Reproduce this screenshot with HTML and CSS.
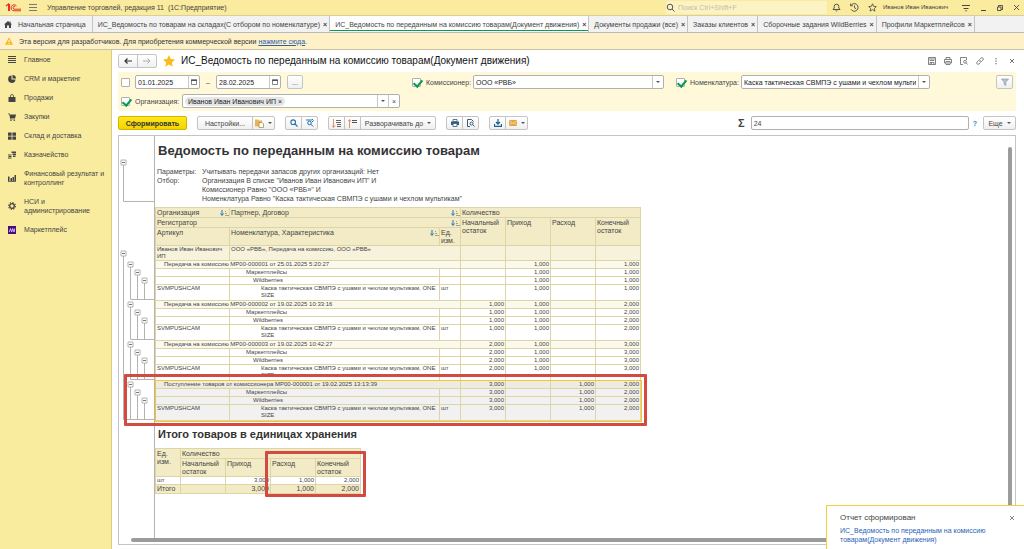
FILE: index.html
```
<!DOCTYPE html>
<html lang="ru">
<head>
    <meta charset="UTF-8">
    <meta name="viewport" content="width=device-width, initial-scale=1.0">
    <title>ИС_Ведомость по переданным на комиссию товарам(Документ движения)</title>
    <link rel="stylesheet" href="styles.css">
</head>
<body>
    <header class="titlebar">
        <svg class="logo" width="17" height="9" viewBox="0 0 17 9" fill="none" stroke="#e0342a"><path d="M1 3 3.500 1v7M4.500 8V1" stroke-width="1.100"/><path d="M11.500 3A3 3 0 1 0 9 7.800h7M10.200 3.300A1.400 1.400 0 1 0 9 6.200h7"/></svg>
        <button class="icon-btn" aria-label="Меню"><svg width="8" height="7" viewBox="0 0 8 7" stroke="#777"><path d="M0 .5h8M0 3.500h8M0 6.500h8"/></svg></button>
        <span class="app-name">Управление торговлей, редакция 11&nbsp; (1С:Предприятие)</span>
        <label class="search">
            <svg width="9" height="9" viewBox="0 0 9 9" fill="none" stroke="#555"><circle cx="4" cy="4" r="2.800"/><path d="m6 6 2.500 2.500"/></svg>
            <input type="text" placeholder="Поиск Ctrl+Shift+F" aria-label="Поиск">
        </label>
        <div class="title-icons">
            <button class="icon-btn" aria-label="Уведомления"><svg width="9" height="9" viewBox="0 0 9 9" fill="none" stroke="#444" stroke-width=".9"><path d="M1 6.500h7L6.800 5V3.500a2.300 2.300 0 0 0-4.600 0V5zM3.600 7.500q.9 1 1.800 0"/></svg></button>
            <button class="icon-btn" aria-label="История"><svg width="9" height="9" viewBox="0 0 9 9" fill="none" stroke="#444" stroke-width=".9"><path d="M1 2.500A3.800 3.800 0 1 1 1 6.300M.6.600v2.200h2.200M4.500 2.500v2.300l1.500.9"/></svg></button>
            <button class="icon-btn" aria-label="Избранное"><svg width="9" height="9" viewBox="0 0 9 9" fill="none" stroke="#444" stroke-width=".8"><path d="m4.500.8 1.100 2.500 2.700.3-2 1.800.6 2.700-2.400-1.400-2.400 1.400.6-2.700-2-1.800 2.700-.3z"/></svg></button>
            <span class="user">Иванов Иван Иванович</span>
            <button class="icon-btn" aria-label="Сервис"><svg width="8" height="8" viewBox="0 0 8 8" stroke="#444"><path d="M0 1.500h8M1.500 4.500h5"/><path d="m2.500 6.500 1.500 1 1.500-1z" fill="#444" stroke="none"/></svg></button>
            <button class="icon-btn" aria-label="Свернуть"><svg width="8" height="8" viewBox="0 0 8 8" stroke="#444"><path d="M2 6.500h5"/></svg></button>
            <button class="icon-btn" aria-label="Развернуть"><svg width="8" height="8" viewBox="0 0 8 8" fill="none" stroke="#444" stroke-width=".9"><path d="M1.500 3h3.500v3.500h-3.500zM2.500 3V1.500h4v4H5"/></svg></button>
            <button class="icon-btn" aria-label="Закрыть"><svg width="7" height="7" viewBox="0 0 7 7" stroke="#444" stroke-width=".9"><path d="m1 1 5 5M6 1 1 6"/></svg></button>
        </div>
    </header>

    <nav class="tabs">
        <a class="tab home" href="#"><svg width="8" height="7" viewBox="0 0 8 7" fill="#444"><path d="M4 0 0 3.500h1V7h2V4.500h2V7h2V3.500h1L6.500 2V.5h-1v1z"/></svg>Начальная страница</a>
        <a class="tab" href="#">ИС_Ведомость по товарам на складах(С отбором по номенклатуре)<b>×</b></a>
        <a class="tab active" href="#">ИС_Ведомость по переданным на комиссию товарам(Документ движения)<b>×</b></a>
        <a class="tab" href="#">Документы продажи (все)<b>×</b></a>
        <a class="tab" href="#">Заказы клиентов<b>×</b></a>
        <a class="tab" href="#">Сборочные задания WildBerries<b>×</b></a>
        <a class="tab" href="#">Профили Маркетплейсов<b>×</b></a>
    </nav>

    <div class="notice">
        <svg width="8" height="8" viewBox="0 0 8 8"><path d="M4 .3 8 7.700H0z" fill="#f7b91e"/><path d="M4 3v2.300M4 6v.8" stroke="#fff"/></svg>
        <span>Эта версия для разработчиков. Для приобретения коммерческой версии <a href="#">нажмите сюда</a>.</span>
    </div>

    <div class="workspace">
        <nav class="sidebar">
            <a href="#"><svg width="8" height="8" viewBox="0 0 8 8" stroke="#444"><path d="M0 .5h8M0 2.500h8M0 4.500h8M0 6.500h8"/></svg>Главное</a>
            <a href="#"><svg width="8" height="8" viewBox="0 0 8 8" fill="#444"><path d="M3.500.5v4h4A3.700 3.700 0 1 1 3.500.5zM4.500 0A3.500 3.500 0 0 1 8 3.500H4.500z"/></svg>CRM и маркетинг</a>
            <a href="#"><svg width="8" height="8" viewBox="0 0 8 8" fill="#444"><path d="M.5 3h7v5h-7z"/><path d="M2.500 3.500V2a1.500 1.500 0 0 1 3 0v1.500" fill="none" stroke="#444" stroke-width=".8"/></svg>Продажи</a>
            <a href="#"><svg width="8" height="8" viewBox="0 0 8 8" fill="#444"><path d="M0 .5h1.500L2 1.500h6L7.200 5H2.800v.6H7v.6H2.200L1.300 1.200H0z"/><circle cx="3" cy="7.200" r=".8"/><circle cx="6.300" cy="7.200" r=".8"/></svg>Закупки</a>
            <a href="#"><svg width="8" height="8" viewBox="0 0 8 8" fill="#444"><path d="M0 .5h3.600v3.200H0zM4.400.5H8v3.200H4.400zM0 4.500h3.600v3.200H0zM4.400 4.500H8v3.200H4.400z"/></svg>Склад и доставка</a>
            <a href="#"><svg width="8" height="8" viewBox="0 0 8 8" fill="#444"><path d="M3.500.5H8V2H3.500zM4.500 2.500H8V4H4.500zM5 4.500h2.500V6H5zM0 3.500h3.500v1H0zM.5 5h3v1h-3zM0 6.500h3.500v1H0z"/></svg>Казначейство</a>
            <a href="#"><svg width="8" height="8" viewBox="0 0 8 8" fill="#444"><path d="M0 2.500h1.500V7H0zM2.500 4H4v3H2.500zM4.500 3H6v4H4.500zM6.500 1H8v6H6.500zM0 7h8v.7H0z"/></svg>Финансовый результат и контроллинг</a>
            <a href="#"><svg width="8" height="8" viewBox="0 0 8 8" fill="none" stroke="#444"><circle cx="4" cy="4" r="2.300" stroke-width="1.300"/><circle cx="4" cy="4" r="3.400" stroke-width="1.100" stroke-dasharray="1.330 1.330"/></svg>НСИ и администрирование</a>
            <a href="#"><svg width="8" height="8" viewBox="0 0 8 8"><path d="M0 0h8v8H0z" fill="#42107c"/><path d="M1.300 6 2.500 2.500 3.700 6l1-3.500L6 6l.8-3.500" fill="none" stroke="#e9b8f5" stroke-width=".9"/></svg>Маркетплейс</a>
        </nav>

        <main class="form">
            <div class="form-head">
                <div class="btn-group">
                    <button class="btn nav-btn" aria-label="Назад"><svg width="8" height="6" viewBox="0 0 8 6" fill="none" stroke="#333" stroke-width="1.200"><path d="M8 3H1M3.500.5 1 3l2.500 2.500"/></svg></button>
                    <button class="btn nav-btn" aria-label="Вперед"><svg width="8" height="6" viewBox="0 0 8 6" fill="none" stroke="#aaa"><path d="M0 3h7M4.500.5 7 3 4.500 5.500"/></svg></button>
                </div>
                <svg class="star" width="12" height="12" viewBox="0 0 12 12" fill="#f6bd1b"><path d="m6 0 1.800 4.100 4.200.4-3.200 2.900 1 4.300L6 9.500l-3.800 2.200 1-4.300L0 4.500l4.200-.4z"/></svg>
                <h1>ИС_Ведомость по переданным на комиссию товарам(Документ движения)</h1>
                <div class="form-icons">
                    <button class="icon-btn" aria-label="Сохранить"><svg width="8" height="8" viewBox="0 0 8 8" fill="none" stroke="#666" stroke-width=".8"><path d="M.5.500h7v7h-7zM2 .5v3h4v-3M3 2h2M2 7.500v-2h4v2M3 6.500h1"/></svg></button>
                    <button class="icon-btn" aria-label="Печать"><svg width="8" height="8" viewBox="0 0 8 8" fill="none" stroke="#666" stroke-width=".8"><path d="M2 2.500v-2h4v2M2 6H.5V2.500h7V6H6M2 4.500h4v3H2zM3 6h2"/></svg></button>
                    <button class="icon-btn" aria-label="Просмотр"><svg width="8" height="8" viewBox="0 0 8 8" fill="none" stroke="#666" stroke-width=".8"><path d="M3 7.500H.5v-7h6V3"/><circle cx="5" cy="4.800" r="1.400"/><path d="m6 5.800 1.800 1.800"/></svg></button>
                    <button class="icon-btn" aria-label="Ссылка"><svg width="8" height="8" viewBox="0 0 8 8" fill="none" stroke="#666" stroke-width=".8"><path d="M3.500 2.500 5 1q1-.8 1.900.1.900.9.1 1.900L5.500 4.500q-1 .8-2 0M4.500 5.500 3 7q-1 .8-1.900-.1-.9-.9-.1-1.900L2.500 3.500q1-.8 2 0"/></svg></button>
                    <button class="icon-btn" aria-label="Еще"><svg width="8" height="8" viewBox="0 0 8 8" fill="#555"><path d="M3.500 1h1v1.200h-1zM3.500 3.500h1v1.200h-1zM3.500 6h1v1.200h-1z"/></svg></button>
                    <button class="icon-btn" aria-label="Закрыть"><svg width="8" height="8" viewBox="0 0 8 8" stroke="#666" stroke-width=".9"><path d="m2 2 4 4M6 2 2 6"/></svg></button>
                </div>
            </div>

            <section class="filters">
                <div class="filter">
                    <input type="checkbox" aria-label="Период">
                    <div class="combo date"><input type="text" value="01.01.2025" aria-label="Начало периода"><button aria-label="Календарь"><svg width="6" height="6" viewBox="0 0 6 6"><path d="M.5 1h5v4.500h-5z" fill="none" stroke="#555" stroke-width=".7"/><path d="M0 .5h6v1.500H0z" fill="#555"/></svg></button></div>
                    <span class="dash">–</span>
                    <div class="combo date"><input type="text" value="28.02.2025" aria-label="Конец периода"><button aria-label="Календарь"><svg width="6" height="6" viewBox="0 0 6 6"><path d="M.5 1h5v4.500h-5z" fill="none" stroke="#555" stroke-width=".7"/><path d="M0 .5h6v1.500H0z" fill="#555"/></svg></button></div>
                    <button class="btn dots">...</button>
                </div>
                <div class="filter commissioner">
                    <input type="checkbox" id="useCommissioner" checked>
                    <label for="useCommissioner">Комиссионер:</label>
                    <div class="combo"><input type="text" value="ООО «РВБ»" aria-label="Комиссионер"><button class="arrow" aria-label="Выбрать"></button></div>
                </div>
                <div class="filter item">
                    <input type="checkbox" id="useItem" checked>
                    <label for="useItem">Номенклатура:</label>
                    <div class="combo"><input type="text" value="Каска тактическая СВМПЭ с ушами и чехлом мультикам" aria-label="Номенклатура"><button class="arrow" aria-label="Выбрать"></button></div>
                </div>
                <button class="btn" aria-label="Отбор"><svg width="8" height="8" viewBox="0 0 8 8"><path d="M.5 1h7L4.800 4.200V7.500l-1.600-1V4.200z" fill="#b9c3cc" stroke="#8c99a5" stroke-width=".7"/></svg></button>
                <div class="filter org">
                    <input type="checkbox" id="useOrg" checked>
                    <label for="useOrg">Организация:</label>
                    <div class="combo"><span class="chip">Иванов Иван Иванович ИП <i>×</i></span><button class="arrow" aria-label="Выбрать"></button><button aria-label="Очистить">×</button></div>
                </div>
            </section>

            <div class="toolbar">
                <button class="btn primary">Сформировать</button>
                <div class="btn-group">
                    <button class="btn settings">Настройки...</button>
                    <button class="btn drop" aria-label="Варианты"><svg width="9" height="9" viewBox="0 0 9 9"><path d="M0 .5h3l1 1h3v6H0z" fill="#e9b552"/><path d="M4 3.500h3l1.500 1.500v3.500H4z" fill="#fff" stroke="#a87b33" stroke-width=".7"/></svg></button>
                </div>
                <div class="btn-group">
                    <button class="btn" aria-label="Найти"><svg width="8" height="8" viewBox="0 0 8 8" fill="none" stroke="#2273a8" stroke-width="1.100"><circle cx="3.200" cy="3.200" r="2.300"/><path d="m5 5 2.500 2.500"/></svg></button>
                    <button class="btn" aria-label="Искать далее"><svg width="8" height="8" viewBox="0 0 8 8" fill="none" stroke="#2273a8"><circle cx="3.500" cy="4" r="1.800"/><path d="m5 5.300 2 2.200M0 1h6M6 0l1.500 1.500L6 3"/></svg></button>
                </div>
                <div class="btn-group">
                    <button class="btn" aria-label="Развернуть"><svg width="9" height="9" viewBox="0 0 9 9" fill="none"><path d="M1.500 0v8M0 6.500l1.500 2 1.500-2" stroke="#e0784a" stroke-width=".8"/><path d="M4 1.500h5M4 3.500h5M5 5.500h4M5 7.500h4" stroke="#666"/></svg></button>
                    <button class="btn" aria-label="Свернуть"><svg width="9" height="9" viewBox="0 0 9 9" fill="none"><path d="M1.500 9V1M0 2.500l1.500-2 1.500 2" stroke="#e0784a" stroke-width=".8"/><path d="M4 1.500h5M4 3.500h5" stroke="#555"/></svg></button>
                    <button class="btn drop expand">Разворачивать до</button>
                </div>
                <div class="btn-group">
                    <button class="btn" aria-label="Печать"><svg width="8" height="8" viewBox="0 0 8 8"><path d="M0 2.500h8V6H0z" fill="#355c7d"/><path d="M2 .5h4v2H2zM2 4.500h4v3H2z" fill="#fff" stroke="#355c7d" stroke-width=".8"/></svg></button>
                    <button class="btn" aria-label="Просмотр"><svg width="8" height="8" viewBox="0 0 8 8" fill="none" stroke="#355c7d"><path d="M3 7.500H.5v-7h4L6.500 2.500"/><circle cx="4.500" cy="4.500" r="1.500"/><path d="m5.500 5.500 2 2"/></svg></button>
                </div>
                <div class="btn-group">
                    <button class="btn" aria-label="Сохранить"><svg width="8" height="8" viewBox="0 0 8 8" fill="none" stroke="#1d5f92" stroke-width="1.200"><path d="M4 0v5M2 3l2 2.200L6 3M.5 5v2.300h7V5"/></svg></button>
                    <button class="btn drop" aria-label="Отправить"><svg width="8" height="6" viewBox="0 0 8 6"><path d="M0 0h8v6H0z" fill="#e8a33c"/><path d="m0 .5 4 3 4-3M0 5.500l2.500-2.500M8 5.500 5.500 3" fill="none" stroke="#fff" stroke-width=".6"/></svg></button>
                </div>
                <label class="sigma" for="sum">Σ</label>
                <input class="sum" id="sum" type="text" value="24">
                <a class="help" href="#">?</a>
                <button class="btn drop more">Еще</button>
            </div>

            <section class="sheet">
                <svg class="gutter" width="36" height="402" viewBox="0 0 36 402" fill="none" stroke="#b4b4b4">
                    <defs>
                        <g id="node"><path d="M-2.500-2.500h5v5h-5z" fill="#fff"/><path d="M-1.500 0h3" stroke="#777"/></g>
                        <g id="branch">
                            <path d="M11.500 0v35.500h24M18.500 8v27M25.500 16v19"/>
                            <use href="#node" x="11.500" y=".5"/>
                            <use href="#node" x="18.500" y="8.500"/>
                            <use href="#node" x="25.500" y="16.500"/>
                        </g>
                    </defs>
                    <path d="M4.500 27v38.500h31.500M4.500 117v166.500h31.500M35.500 0v402"/>
                    <use href="#node" x="4.500" y="26.500"/>
                    <use href="#node" x="4.500" y="117.500"/>
                    <use href="#branch" y="128"/>
                    <use href="#branch" y="168"/>
                    <use href="#branch" y="208"/>
                    <use href="#branch" y="248"/>
                </svg>
                <div class="report">
                    <h2>Ведомость по переданным на комиссию товарам</h2>
                    <dl class="params">
                        <dt>Параметры:</dt><dd>Учитывать передачи запасов других организаций: Нет</dd>
                        <dt>Отбор:</dt><dd>Организация В списке "Иванов Иван Иванович ИП" И<br>Комиссионер Равно "ООО «РВБ»" И<br>Номенклатура Равно "Каска тактическая СВМПЭ с ушами и чехлом мультикам"</dd>
                    </dl>

                    <table class="main-table">
                        <colgroup><col class="c-org"><col class="c-item"><col class="c-unit"><col class="c-num"><col class="c-num"><col class="c-num"><col class="c-num"></colgroup>
                        <thead>
                            <tr><th class="sorted">Организация</th><th class="sorted" colspan="2">Партнер, Договор</th><th colspan="4">Количество</th></tr>
                            <tr><th class="sorted" colspan="3">Регистратор</th><th rowspan="2">Начальный остаток</th><th rowspan="2">Приход</th><th rowspan="2">Расход</th><th rowspan="2">Конечный остаток</th></tr>
                            <tr><th>Артикул</th><th class="sorted">Номенклатура, Характеристика</th><th>Ед. изм.</th></tr>
                        </thead>
                        <tbody>
                            <tr class="partner"><td>Иванов Иван Иванович ИП</td><td colspan="2">ООО «РВБ», Передача на комиссию, ООО «РВБ»</td><td></td><td></td><td></td><td></td></tr>
                        </tbody>
                        <tbody>
                            <tr class="doc"><td colspan="3">Передача на комиссию МР00-000001 от 25.01.2025 5:20:27</td><td></td><td>1,000</td><td></td><td>1,000</td></tr>
                            <tr><td></td><td class="l1">Маркетплейсы</td><td></td><td></td><td>1,000</td><td></td><td>1,000</td></tr>
                            <tr><td></td><td class="l2">Wildberries</td><td></td><td></td><td>1,000</td><td></td><td>1,000</td></tr>
                            <tr><td>SVMPUSHCAM</td><td class="l3">Каска тактическая СВМПЭ с ушами и чехлом мультикам, ONE SIZE</td><td>шт</td><td></td><td>1,000</td><td></td><td>1,000</td></tr>
                        </tbody>
                        <tbody>
                            <tr class="doc"><td colspan="3">Передача на комиссию МР00-000002 от 19.02.2025 10:33:16</td><td>1,000</td><td>1,000</td><td></td><td>2,000</td></tr>
                            <tr><td></td><td class="l1">Маркетплейсы</td><td></td><td>1,000</td><td>1,000</td><td></td><td>2,000</td></tr>
                            <tr><td></td><td class="l2">Wildberries</td><td></td><td>1,000</td><td>1,000</td><td></td><td>2,000</td></tr>
                            <tr><td>SVMPUSHCAM</td><td class="l3">Каска тактическая СВМПЭ с ушами и чехлом мультикам, ONE SIZE</td><td>шт</td><td>1,000</td><td>1,000</td><td></td><td>2,000</td></tr>
                        </tbody>
                        <tbody>
                            <tr class="doc"><td colspan="3">Передача на комиссию МР00-000003 от 19.02.2025 10:42:27</td><td>2,000</td><td>1,000</td><td></td><td>3,000</td></tr>
                            <tr><td></td><td class="l1">Маркетплейсы</td><td></td><td>2,000</td><td>1,000</td><td></td><td>3,000</td></tr>
                            <tr><td></td><td class="l2">Wildberries</td><td></td><td>2,000</td><td>1,000</td><td></td><td>3,000</td></tr>
                            <tr><td>SVMPUSHCAM</td><td class="l3">Каска тактическая СВМПЭ с ушами и чехлом мультикам, ONE SIZE</td><td>шт</td><td>2,000</td><td>1,000</td><td></td><td>3,000</td></tr>
                        </tbody>
                        <tbody class="selected">
                            <tr class="doc"><td colspan="3">Поступление товаров от комиссионера МР00-000001 от 19.02.2025 13:13:39</td><td>3,000</td><td></td><td>1,000</td><td>2,000</td></tr>
                            <tr><td></td><td class="l1">Маркетплейсы</td><td></td><td>3,000</td><td></td><td>1,000</td><td>2,000</td></tr>
                            <tr><td></td><td class="l2">Wildberries</td><td></td><td>3,000</td><td></td><td>1,000</td><td>2,000</td></tr>
                            <tr><td>SVMPUSHCAM</td><td class="l3">Каска тактическая СВМПЭ с ушами и чехлом мультикам, ONE SIZE</td><td>шт</td><td>3,000</td><td></td><td>1,000</td><td>2,000</td></tr>
                        </tbody>
                    </table>

                    <h3>Итого товаров в единицах хранения</h3>
                    <table class="total-table">
                        <colgroup><col class="c-total"><col class="c-num"><col class="c-num"><col class="c-num"><col class="c-num"></colgroup>
                        <thead>
                            <tr><th rowspan="2">Ед. изм.</th><th colspan="4">Количество</th></tr>
                            <tr><th>Начальный остаток</th><th>Приход</th><th>Расход</th><th>Конечный остаток</th></tr>
                        </thead>
                        <tbody>
                            <tr><td>шт</td><td></td><td>3,000</td><td>1,000</td><td>2,000</td></tr>
                            <tr class="total"><td>Итого</td><td></td><td>3,000</td><td>1,000</td><td>2,000</td></tr>
                        </tbody>
                    </table>
                </div>
                <div class="scroll-y"></div>
                <div class="scroll-x"></div>
                <div class="mark mark-group"></div>
                <div class="mark mark-total"></div>
            </section>
        </main>
    </div>

    <aside class="toast">
        <button class="icon-btn" aria-label="Закрыть"><svg width="6" height="6" viewBox="0 0 6 6" stroke="#666" stroke-width=".8"><path d="m1 1 4 4M5 1 1 5"/></svg></button>
        <strong>Отчет сформирован</strong>
        <a href="#">ИС_Ведомость по переданным на комиссию товарам(Документ движения)</a>
    </aside>
</body>
</html>
```
FILE: styles.css
```
* {
    box-sizing: border-box;
}
body {
    margin: 0;
    height: 100vh;
    display: flex;
    flex-direction: column;
    overflow: hidden;
    font-family: "Liberation Sans", Arial, sans-serif;
    font-size: 7px;
    line-height: 9px;
    color: #444;
    background: #fff;
}
input, button {
    font: inherit;
    color: inherit;
    margin: 0;
    padding: 0;
}
svg {
    display: block;
    flex: none;
}
a {
    color: inherit;
    text-decoration: none;
}
.icon-btn {
    border: none;
    background: none;
}

/* Title bar */
.titlebar {
    display: flex;
    align-items: center;
    height: 15px;
    padding: 0 4px 0 5px;
    background: #faeb9e;
}
.logo {
    margin-right: 7px;
}
.app-name {
    margin-left: 10px;
}
.search {
    display: flex;
    align-items: center;
    gap: 3px;
    width: 161px;
    height: 13px;
    margin-left: auto;
    border-radius: 2px;
    background: #fcf3c4;
}
.search input {
    flex: 1;
    border: none;
    background: none;
}
.search input::placeholder {
    color: #c4be9c;
}
.title-icons {
    display: flex;
    align-items: center;
    gap: 9px;
    margin-left: 5px;
}
.user {
    width: 70px;
    margin-left: -3px;
    font-size: 6px;
    white-space: nowrap;
}

/* Open windows */
.tabs {
    display: flex;
    height: 18px;
    background: #f2f2f2;
    border-top: 1px solid #d8cf9f;
    border-bottom: 1px solid #b9b9b9;
}
.tab {
    display: flex;
    align-items: center;
    gap: 3px;
    padding: 0 2px 0 5px;
    border-right: 1px solid #c3c3c3;
    white-space: nowrap;
}
.tab.home {
    gap: 6px;
    padding: 0 6px 0 4px;
}
.tab.active {
    background: #fff;
    box-shadow: inset 0 -1px #fff, inset 0 -2px #0a9a4e;
}

.notice {
    display: flex;
    align-items: center;
    gap: 6px;
    height: 17px;
    padding-left: 5px;
    background: #fef1c8;
    border-bottom: 1px solid #c9c2a4;
    color: #333;
}
.notice a {
    color: #2a62a8;
    text-decoration: underline;
}

.workspace {
    flex: 1;
    display: flex;
    min-height: 0;
}
.sidebar {
    width: 112px;
    flex: none;
    background: #faec9f;
    border-right: 1px solid #d9cc85;
}
.sidebar a {
    display: flex;
    align-items: center;
    gap: 8px;
    padding: 5px 4px 5px 8px;
}

/* Form */
.form {
    flex: 1;
    min-width: 0;
    display: flex;
    flex-direction: column;
    padding: 4px 8px 4px 6px;
}
.form-head {
    display: flex;
    align-items: center;
    height: 14px;
}
h1 {
    margin: 0;
    font-size: 10px;
    line-height: 12px;
    font-weight: normal;
    color: #111;
}
.star {
    margin: 0 6px;
}
.form-icons {
    display: flex;
    gap: 8px;
    margin-left: auto;
}
.btn {
    display: flex;
    align-items: center;
    justify-content: center;
    width: 17px;
    height: 14px;
    border: 1px solid #c4c4c4;
    border-radius: 2px;
    background: linear-gradient(#fff, #f0f0f0);
    white-space: nowrap;
}
.btn-group {
    display: flex;
}
.btn-group .btn + .btn {
    margin-left: -1px;
    border-top-left-radius: 0;
    border-bottom-left-radius: 0;
}
.btn-group .btn:not(:last-child) {
    border-top-right-radius: 0;
    border-bottom-right-radius: 0;
}
.nav-btn {
    width: 20px;
}
.drop::after, .arrow::after {
    content: "";
    border: 2px solid transparent;
    border-top-color: #555;
    border-bottom: none;
}
.drop {
    width: 23px;
    gap: 4px;
}

.filters {
    display: grid;
    grid-template-columns: 291fr 264fr 320fr 17px;
    row-gap: 5px;
    margin-top: 4px;
    padding: 3px;
    background: #fff9da;
}
.filter {
    display: flex;
    align-items: center;
    gap: 6px;
    min-width: 0;
}
.filter label {
    width: 43px;
    white-space: nowrap;
}
.filter.commissioner {
    padding-right: 12px;
}
.filter.item {
    padding-right: 66px;
}
.filter.item label {
    width: 47px;
}
.filter.org {
    padding-right: 12px;
}
input[type="checkbox"] {
    appearance: none;
    width: 9px;
    height: 9px;
    margin-right: -1px;
    flex: none;
    border: 1px solid #b0b0b0;
    border-radius: 1px;
    background: #fff;
}
input[type="checkbox"]:checked::before {
    content: "";
    display: block;
    width: 4px;
    height: 7px;
    margin: -1px 0 0 2px;
    border: solid #0a9a4e;
    border-width: 0 2px 2px 0;
    transform: rotate(40deg);
}
.combo {
    flex: 1;
    display: flex;
    align-items: center;
    min-width: 0;
    height: 14px;
    margin-left: -2px;
    border: 1px solid #b0b0b0;
    border-radius: 2px;
    background: #fff;
}
.combo input {
    flex: 1;
    min-width: 0;
    padding: 0 2px;
    border: none;
    background: none;
    color: #222;
}
.combo button {
    display: flex;
    align-items: center;
    justify-content: center;
    width: 11px;
    height: 12px;
    border: none;
    border-left: 1px solid #c8c8c8;
    background: none;
}
.combo.date {
    flex: none;
    width: 65px;
    margin-left: 0;
}
.dash {
    width: 4px;
}
.dots {
    width: 16px;
}
.chip {
    margin: 0 auto 0 2px;
    padding: 0 3px;
    border-radius: 5px;
    background: #e6e6e6;
    color: #222;
    white-space: nowrap;
}
.chip i {
    font-style: normal;
}

.toolbar {
    display: flex;
    align-items: center;
    gap: 10px;
    margin: 5px 0;
}
.primary {
    width: 69px;
    border-color: #d0b400;
    background: linear-gradient(#ffe81a, #f5d400);
    font-weight: bold;
    color: #333;
}
.settings {
    width: 56px;
}
.expand {
    width: 76px;
}
.sigma {
    margin-left: auto;
    margin-right: -4px;
    font-size: 11px;
    font-weight: bold;
}
.sum {
    width: 218px;
    height: 14px;
    padding: 0 2px;
    border: 1px solid #b0b0b0;
    border-radius: 2px;
}
.help {
    margin: 0 -4px 0 -6px;
    font-weight: bold;
    color: #2a86c8;
}
.more {
    width: 33px;
}

/* Spreadsheet */
.sheet {
    position: relative;
    flex: 1;
    display: flex;
    min-height: 0;
    border: 1px solid #c4c4c4;
}
.gutter {
    overflow: visible;
}
h2 {
    margin: 7px 0 9px 3px;
    font-size: 13px;
    line-height: 15px;
    color: #333;
}
.params {
    display: grid;
    grid-template-columns: 45px auto;
    margin: 0 0 4px 2px;
}
.params dd {
    margin: 0;
}
table {
    table-layout: fixed;
    border-collapse: collapse;
}
.main-table {
    width: 485px;
}
.total-table {
    width: 205px;
}
.c-org {
    width: 74px;
}
.c-item {
    width: 210px;
}
.c-unit {
    width: 21px;
}
.c-num {
    width: 45px;
}
.c-total {
    width: 25px;
}
th, td {
    border: 1px solid #ddd5a6;
    vertical-align: top;
    text-align: left;
}
th {
    padding: 1px 1px 0;
    background: #f2ebc6;
    font-weight: normal;
    line-height: 8px;
}
th.sorted {
    background: #f2ebc6 url("data:image/svg+xml,%3Csvg xmlns='http://www.w3.org/2000/svg' width='9' height='8' fill='none'%3E%3Cpath d='M2 1v5M.5 4.500 2 6.500l1.500-2' stroke='%231f78b4'/%3E%3Cpath d='M5 2.500h1M5 4.500h2M5 6.500h4' stroke='%23a5a08a'/%3E%3C/svg%3E") no-repeat right 0 top 1px;
}
td {
    padding: 0 1px;
    font-size: 6px;
    line-height: 7px;
    height: 8px;
    white-space: nowrap;
}
td:nth-last-child(-n+4) {
    text-align: right;
}
.partner td {
    background: #f7f2db;
    white-space: normal;
}
.doc td {
    background: #fbf9ec;
}
.doc td:first-child {
    padding-left: 8px;
}
.l1 {
    padding-left: 16px;
}
.l2 {
    padding-left: 23px;
}
.l3 {
    height: 16px;
    padding-left: 31px;
    white-space: normal;
}
.selected td {
    background: #f1f1f1;
}
.selected .doc td {
    background: #eeece2;
}
.selected {
    outline: 1px solid #f3c62c;
}
h3 {
    margin: 7px 0 7px 3px;
    font-size: 11px;
    line-height: 13px;
    color: #333;
}
.total td {
    background: #f2ebc6;
    font-size: 7px;
    line-height: 8px;
}

.scroll-y, .scroll-x {
    position: absolute;
    border-radius: 2px;
    background: #9b9b9b;
}
.scroll-y {
    top: 11px;
    right: 3px;
    bottom: 12px;
    width: 4px;
}
.scroll-x {
    left: 12px;
    right: 14px;
    bottom: 2px;
    height: 4px;
}
/* Highlight frames over the sheet */
.mark {
    position: absolute;
    border: 3px solid #d24a40;
    border-radius: 1px;
}
.mark-group {
    left: 5px;
    top: 238px;
    width: 523px;
    height: 52px;
}
.mark-total {
    left: 146px;
    top: 315px;
    width: 101px;
    height: 46px;
}

.toast {
    position: fixed;
    right: 0;
    bottom: 0;
    width: 198px;
    height: 44px;
    padding: 7px 20px 0 13px;
    border: solid #f6cf3c;
    border-width: 1px 0 0 1px;
    background: #fff;
}
.toast strong {
    display: block;
    margin-bottom: 3px;
    font-size: 8px;
    line-height: 10px;
    font-weight: normal;
}
.toast a {
    color: #2a5fb8;
}
.toast .icon-btn {
    position: absolute;
    top: 9px;
    right: 9px;
}
```
